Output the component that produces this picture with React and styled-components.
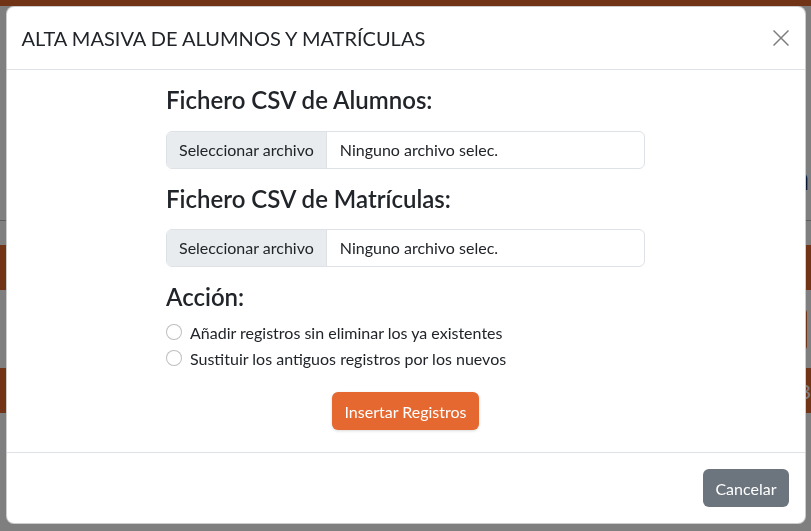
import React from 'react'
import styled, { createGlobalStyle } from 'styled-components'

const GlobalStyle = createGlobalStyle`
  * { box-sizing: border-box; }
  html, body { margin: 0; padding: 0; }
  body {
    font-family: Lato, "Liberation Sans", sans-serif;
    color: #212529;
    background: #fff;
    overflow: hidden;
  }
`

const Page = styled.div`
  width: 811px;
  height: 531px;
`
const Navbar = styled.div`
  height: 6px;
  background: #e4682f;
`
const Main = styled.div`
  display: flex;
  flex-direction: column;
  padding-top: 148px;
`
const PageTitle = styled.h1`
  margin: 0 2px 0 0;
  align-self: flex-end;
  font-size: 32px;
  font-weight: 700;
  color: #1b2f5e;
  line-height: 48px;
`
const Rule = styled.hr`
  margin: 18px 0 24px;
  border: 0;
  border-top: 1px solid #bbb;
`
const OrangeRow = styled.div`
  height: 45px;
  background: #e4682f;
  color: #fff;
  display: flex;
  align-items: center;
  justify-content: flex-end;
  font-size: 20px;
  margin-bottom: ${p => p.$mb || 0}px;
`
const OrangePill = styled.div`
  align-self: flex-end;
  width: 120px;
  height: 45px;
  margin: 0 4px 16px 0;
  border-radius: 6px;
  background: #e4682f;
`

const Backdrop = styled.div`
  position: fixed;
  inset: 0;
  background: rgba(0, 0, 0, 0.5);
`
const Dialog = styled.div`
  position: fixed;
  top: 6px;
  left: 0;
  right: 0;
  width: 800px;
  margin: 0 auto;
  background: #fff;
  border: 1px solid rgba(0, 0, 0, 0.2);
  border-radius: 8px;
`
const Header = styled.div`
  display: flex;
  align-items: center;
  justify-content: space-between;
  padding: 16px 16px 16px 15px;
  border-bottom: 1px solid #dee2e6;
`
const Title = styled.h5`
  margin: 0;
  font-size: 20px;
  font-weight: 400;
  line-height: 30px;
  color: #212529;
`
const CloseButton = styled.button`
  width: 24px;
  height: 24px;
  padding: 4px;
  margin-right: -4px;
  border: 0;
  background: transparent;
  opacity: 0.5;
  display: flex;
  align-items: center;
  justify-content: center;
  cursor: pointer;
`
const Body = styled.div`
  padding: 16px;
`
const Form = styled.form`
  width: 479px;
  margin: 0 auto 6px;
`
const Heading = styled.h4`
  margin: 0 0 ${p => p.$mb}px;
  font-size: 24px;
  font-weight: 600;
  line-height: 1.2;
  color: #212529;
`
const FileField = styled.label`
  display: flex;
  align-items: center;
  height: 38px;
  margin-bottom: 16px;
  border: 1px solid #dee2e6;
  border-radius: 6px;
  overflow: hidden;
  font-size: 16px;
  cursor: pointer;
`
const FileButton = styled.span`
  display: flex;
  align-items: center;
  height: 100%;
  padding: 0 12px;
  background: #e9ecef;
  border-right: 1px solid #dee2e6;
  color: #212529;
`
const FileName = styled.span`
  padding-left: 13px;
  color: #212529;
`
const RadioRow = styled.label`
  display: flex;
  align-items: center;
  gap: 8px;
  height: 24px;
  margin-bottom: 2px;
  font-size: 16px;
  color: #212529;
`
const Radio = styled.span`
  width: 16px;
  height: 16px;
  border-radius: 50%;
  border: 1px solid rgba(0, 0, 0, 0.25);
  background: #fff;
  flex-shrink: 0;
`
const Actions = styled.div`
  display: flex;
  justify-content: center;
  margin-top: 22px;
`
const Button = styled.button`
  height: 38px;
  padding: 0 12px;
  border: 0;
  border-radius: 6px;
  font-family: inherit;
  font-size: 16px;
  color: #fff;
  background: ${p => p.$bg};
  box-shadow: ${p => (p.$shadow ? '0 1px 3px rgba(0,0,0,.15)' : 'none')};
  cursor: pointer;
`
const Footer = styled.div`
  display: flex;
  justify-content: flex-end;
  padding: 12px;
  border-top: 1px solid #dee2e6;
`
const FooterButton = styled(Button)`
  margin: 4px;
`

const files = [
  { label: 'Fichero CSV de Alumnos:', mb: 16 },
  { label: 'Fichero CSV de Matrículas:', mb: 15 },
]
const options = [
  'Añadir registros sin eliminar los ya existentes',
  'Sustituir los antiguos registros por los nuevos',
]

const App = () => {
  return (
    <>
      <GlobalStyle />
      <Page>
        <Navbar />
        <Main>
          <PageTitle>Gestión</PageTitle>
          <Rule />
          <OrangeRow $mb={17} />
          <OrangePill />
          <OrangeRow>B</OrangeRow>
        </Main>
      </Page>

      <Backdrop />
      <Dialog>
        <Header>
          <Title>ALTA MASIVA DE ALUMNOS Y MATRÍCULAS</Title>
          <CloseButton aria-label="Cerrar">
            <svg width="16" height="16" viewBox="0 0 16 16">
              <path d="M0.5 0.5 L15.5 15.5 M15.5 0.5 L0.5 15.5" stroke="#000" strokeWidth="1.5" />
            </svg>
          </CloseButton>
        </Header>

        <Body>
          <Form>
            {files.map(f => (
              <div key={f.label}>
                <Heading $mb={f.mb}>{f.label}</Heading>
                <FileField>
                  <FileButton>Seleccionar archivo</FileButton>
                  <FileName>Ninguno archivo selec.</FileName>
                </FileField>
              </div>
            ))}

            <Heading $mb={9}>Acción:</Heading>
            {options.map(o => (
              <RadioRow key={o}>
                <Radio />
                {o}
              </RadioRow>
            ))}

            <Actions>
              <Button type="button" $bg="#e4682f" $shadow>Insertar Registros</Button>
            </Actions>
          </Form>
        </Body>

        <Footer>
          <FooterButton type="button" $bg="#6c757d">Cancelar</FooterButton>
        </Footer>
      </Dialog>
    </>
  )
}

export default App
